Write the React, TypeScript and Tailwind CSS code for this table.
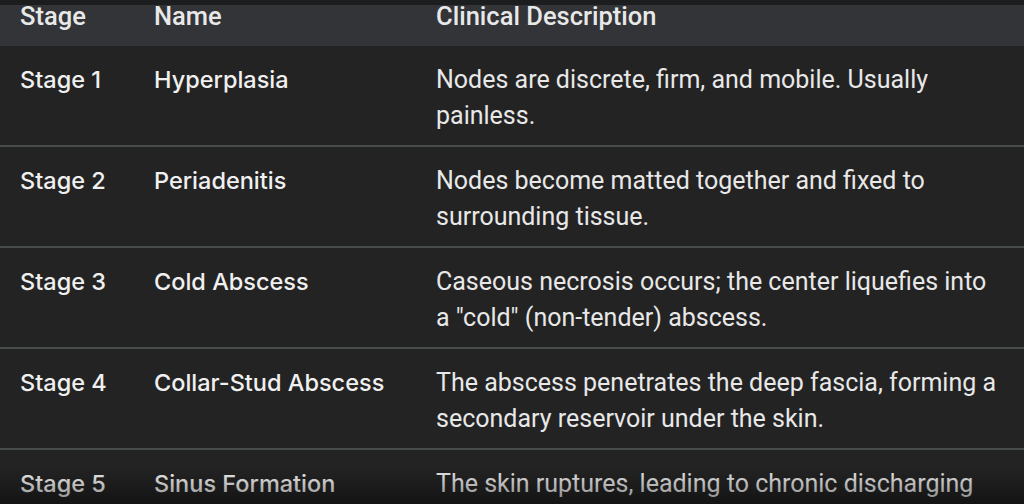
import React from "react";

const rows = [
  { stage: "Stage 1", name: "Hyperplasia", desc: "Nodes are discrete, firm, and mobile. Usually painless." },
  { stage: "Stage 2", name: "Periadenitis", desc: "Nodes become matted together and fixed to surrounding tissue." },
  { stage: "Stage 3", name: "Cold Abscess", desc: 'Caseous necrosis occurs; the center liquefies into a "cold" (non-tender) abscess.' },
  { stage: "Stage 4", name: "Collar-Stud Abscess", desc: "The abscess penetrates the deep fascia, forming a secondary reservoir under the skin." },
  { stage: "Stage 5", name: "Sinus Formation", desc: "The skin ruptures, leading to chronic discharging sinuses that heal poorly." },
];

export default function App() {
  return (
    <div
      className="relative w-[1024px] h-[504px] overflow-hidden bg-[#232323] text-[#e8e8e8]"
      style={{ fontFamily: "Roboto, 'Noto Sans', sans-serif" }}
    >
      <div className="h-[5px] bg-[#1c1d1f]" />
      <div className="grid grid-cols-[134px_282px_1fr] h-[41px] bg-[#333437] text-[25.5px] leading-[22px] font-medium">
        <div className="pl-5">Stage</div>
        <div className="pl-5">Name</div>
        <div className="pl-5">Clinical Description</div>
      </div>
      {rows.map((r, i) => (
        <div
          key={r.stage}
          className={`grid grid-cols-[134px_282px_1fr] pt-4 pb-[11px] text-[25px] leading-[36px] ${i > 0 ? "border-t-2 border-[#484c4c]" : ""}`}
        >
          <div className="pl-5 font-medium font-['Inter',sans-serif] text-[23.5px] text-[#f0f0f0]">{r.stage}</div>
          <div className="pl-5 font-medium font-['Inter',sans-serif] text-[23.5px] text-[#f0f0f0]">{r.name}</div>
          <div className="pl-5 pr-5">{r.desc}</div>
        </div>
      ))}
      <div className="pointer-events-none absolute left-0 right-0 bottom-0 h-[36px] bg-gradient-to-b from-transparent to-[#000000]/45" />
    </div>
  );
}
